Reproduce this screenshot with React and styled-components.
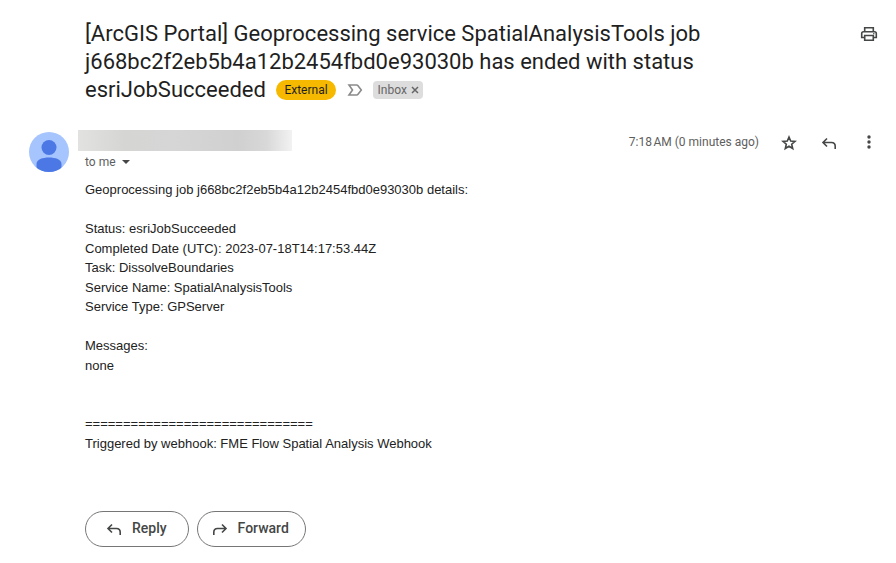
import React, { useState } from "react";
import styled, { createGlobalStyle } from "styled-components";

const GlobalStyle = createGlobalStyle`
  body {
    margin: 0;
    background: #fff;
    color: #1f1f1f;
    font-family: Roboto, "Liberation Sans", sans-serif;
  }
`;

const Page = styled.main`
  padding: 20px 17px 16px 29px;
`;

const SubjectRow = styled.header`
  display: flex;
  align-items: flex-start;
  justify-content: space-between;
  padding-left: 56px;
`;

const SubjectArea = styled.div`
  max-width: 640px;
  font-size: 22px;
  line-height: 28px;
`;

const Subject = styled.h1`
  display: inline;
  margin: 0;
  font-size: inherit;
  font-weight: 400;
`;

const Labels = styled.div`
  display: inline-flex;
  align-items: center;
  height: 20px;
  margin-left: 5px;
  padding-bottom: 2px;
  vertical-align: middle;
  font-size: 12px;
  line-height: 18px;
`;

const External = styled.span`
  padding: 1px 8px;
  border-radius: 10px;
  background: #f6b900;
`;

const Inbox = styled.span`
  display: flex;
  align-items: center;
  gap: 4px;
  padding: 0 4px 0 5px;
  border-radius: 4px;
  background: #ddd;
  color: #666;
`;

const IconButton = styled.button`
  display: flex;
  align-items: center;
  justify-content: center;
  width: ${(props) => props.$size || 20}px;
  height: ${(props) => props.$size || 20}px;
  padding: 0;
  border: 0;
  background: none;
  color: ${(props) => props.$color || "#444746"};
  cursor: pointer;
`;

const Marker = styled(IconButton)`
  margin: 0 8px 0 9px;
`;

const Print = styled(IconButton)`
  margin-top: 4px;
`;

const Message = styled.article`
  display: flex;
  align-items: flex-start;
  gap: 9px;
  margin-top: 26px;
`;

const Avatar = styled.svg`
  flex: none;
  margin-top: 2px;
`;

const Content = styled.div`
  flex: 1;
  min-width: 0;
`;

const MessageHeader = styled.div`
  display: flex;
  align-items: flex-start;
  justify-content: space-between;
`;

const Sender = styled.div`
  width: 214px;
  height: 21px;
  background: linear-gradient(
    90deg,
    #e2e2e1 0%,
    #d5d5d4 22%,
    #d6d6d6 45%,
    #d0d0d0 75%,
    #d8d8d8 88%,
    #f2f2f2 100%
  );
`;

const Recipient = styled.button`
  display: flex;
  align-items: center;
  gap: 6px;
  margin-top: 1px;
  padding: 0 7px;
  border: 0;
  background: none;
  color: #5e5e5e;
  font-family: inherit;
  font-size: 12px;
  line-height: 20px;
  cursor: pointer;
`;

const Actions = styled.div`
  display: flex;
  align-items: center;
  gap: 20px;
  margin-top: 2px;
`;

const Time = styled.time`
  color: #5e5e5e;
  font-size: 12px;
  line-height: 20px;
`;

const Body = styled.p`
  margin: 8px 7px 0;
  color: #222;
  font-family: "Liberation Sans", Arial, sans-serif;
  font-size: 13px;
  line-height: 1.5;
  white-space: pre-wrap;
`;

const Footer = styled.footer`
  display: flex;
  gap: 8px;
  margin: 58px 7px 0;
`;

const PillButton = styled.button`
  display: flex;
  align-items: center;
  gap: 8px;
  height: 36px;
  padding: 0 ${(props) => props.$end}px 2px ${(props) => props.$start}px;
  border: 1px solid #747775;
  border-radius: 18px;
  background: #fff;
  color: #444746;
  font-family: inherit;
  font-size: 14px;
  font-weight: 500;
  cursor: pointer;
`;

const ReplyIcon = () => (
  <svg width="20" height="20" viewBox="0 0 20 20" fill="none" stroke="currentColor" strokeWidth="1.6" aria-hidden="true">
    <path d="M8 6.500L4 10.500l4 4M4 10.500h8.500q3.700 0 3.700 3.700V17" />
  </svg>
);

const ForwardIcon = () => (
  <svg width="20" height="20" viewBox="0 0 20 20" fill="none" stroke="currentColor" strokeWidth="1.6" aria-hidden="true">
    <path d="M12 6.500l4 4-4 4M16 10.500H7.500q-3.700 0-3.700 3.700V17" />
  </svg>
);

const StarIcon = () => (
  <svg width="20" height="20" viewBox="0 0 20 20" fill="none" stroke="currentColor" strokeWidth="1.6" aria-hidden="true">
    <path d="M10 5l1.700 4 4.300.4-3.300 2.800 1 4.300-3.700-2.300-3.700 2.300 1-4.300L4 9.400 8.300 9z" />
  </svg>
);

const MoreIcon = () => (
  <svg width="20" height="20" viewBox="0 0 20 20" fill="currentColor" aria-hidden="true">
    <circle cx="10" cy="5" r="1.7" />
    <circle cx="10" cy="10" r="1.7" />
    <circle cx="10" cy="15" r="1.7" />
  </svg>
);

const PrintIcon = () => (
  <svg width="20" height="20" viewBox="0 0 20 20" fill="none" stroke="currentColor" strokeWidth="1.6" aria-hidden="true">
    <path d="M5.700 7.500V3.700h8.600v3.800M5.700 13.500H2.700V9.500q0-1.800 1.800-1.800h11q1.800 0 1.800 1.800v4h-3M5.700 11.500h8.600v4.800H5.700z" />
    <circle cx="14.800" cy="9.800" r=".8" fill="currentColor" stroke="none" />
  </svg>
);

const ImportantIcon = () => (
  <svg width="20" height="20" viewBox="0 0 20 20" fill="none" stroke="currentColor" strokeWidth="1.6" aria-hidden="true">
    <path d="M4 5h7.700q.7 0 1.100.5L16.300 10l-3.500 4.500q-.4.5-1.100.5H4l3.500-5z" />
  </svg>
);

const CloseIcon = () => (
  <svg width="8" height="8" viewBox="0 0 8 8" fill="none" stroke="currentColor" strokeWidth="1.5" aria-hidden="true">
    <path d="M1 1l6 6M7 1L1 7" />
  </svg>
);

const body = `Geoprocessing job j668bc2f2eb5b4a12b2454fbd0e93030b details:

Status: esriJobSucceeded
Completed Date (UTC): 2023-07-18T14:17:53.44Z
Task: DissolveBoundaries
Service Name: SpatialAnalysisTools
Service Type: GPServer

Messages:
none


==============================
Triggered by webhook: FME Flow Spatial Analysis Webhook`;

const App = () => {
  const [inInbox, setInInbox] = useState(true);
  return (
    <>
      <GlobalStyle />
      <Page>
        <SubjectRow>
          <SubjectArea>
            <Subject>
              [ArcGIS Portal] Geoprocessing service SpatialAnalysisTools job
              j668bc2f2eb5b4a12b2454fbd0e93030b has ended with status
              esriJobSucceeded
            </Subject>{" "}
            <Labels>
              <External>External</External>
              <Marker $color="#8a8a8a" aria-label="Mark as important">
                <ImportantIcon />
              </Marker>
              {inInbox && (
                <Inbox>
                  Inbox
                  <IconButton
                    $size={8}
                    $color="#666"
                    aria-label="Remove label Inbox"
                    onClick={() => setInInbox(false)}
                  >
                    <CloseIcon />
                  </IconButton>
                </Inbox>
              )}
            </Labels>
          </SubjectArea>
          <Print aria-label="Print">
            <PrintIcon />
          </Print>
        </SubjectRow>
        <Message>
          <Avatar width="40" height="40" viewBox="0 0 40 40" aria-hidden="true">
            <clipPath id="avatar">
              <circle cx="20" cy="20" r="20" />
            </clipPath>
            <g clipPath="url(#avatar)">
              <path fill="#a6c4fd" d="M0 0h40v40H0z" />
              <circle cx="20" cy="15.5" r="7.5" fill="#4c78e6" />
              <path fill="#4c78e6" d="M7.500 40v-8c0-4.500 6-6.500 12.500-6.500s12.500 2 12.500 6.500v8z" />
            </g>
          </Avatar>
          <Content>
            <MessageHeader>
              <div>
                <Sender />
                <Recipient>
                  to me
                  <svg width="8" height="4" viewBox="0 0 8 4" aria-hidden="true">
                    <path fill="#444746" d="M0 0h8L4 4z" />
                  </svg>
                </Recipient>
              </div>
              <Actions>
                <Time>7:18{"\u202f"}AM (0 minutes ago)</Time>
                <IconButton aria-label="Star">
                  <StarIcon />
                </IconButton>
                <IconButton aria-label="Reply">
                  <ReplyIcon />
                </IconButton>
                <IconButton aria-label="More">
                  <MoreIcon />
                </IconButton>
              </Actions>
            </MessageHeader>
            <Body>{body}</Body>
            <Footer>
              <PillButton $start={18} $end={21}>
                <ReplyIcon />
                Reply
              </PillButton>
              <PillButton $start={12} $end={16}>
                <ForwardIcon />
                Forward
              </PillButton>
            </Footer>
          </Content>
        </Message>
      </Page>
    </>
  );
};

export default App;
